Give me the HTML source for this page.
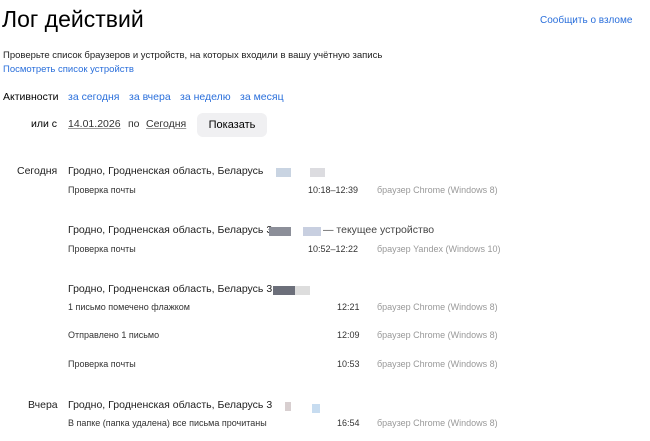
<!DOCTYPE html>
<html><head><meta charset="utf-8"><style>
body{margin:0;width:650px;height:441px;background:#fff;font-family:"Liberation Sans",Arial,sans-serif;position:relative;overflow:hidden;color:#000}
.a{position:absolute;white-space:nowrap;line-height:14px}
.l{color:#2a6fdb}
.s{font-size:9px;color:#333}
.g{font-size:9px;color:#999}
.m{font-size:10.5px;color:#222}
.u{text-decoration:underline;text-decoration-color:#999}
.px{position:absolute;height:9px}
</style></head><body>
<div class="a" style="left:2px;top:5px;font-size:23px;line-height:28px">Лог действий</div>
<div class="a l" style="left:540px;top:14px;font-size:10px">Сообщить о взломе</div>
<div class="a" style="left:3px;top:49px;font-size:9.5px;color:#222">Проверьте список браузеров и устройств, на которых входили в вашу учётную запись</div>
<div class="a l" style="left:3px;top:63px;font-size:9.5px">Посмотреть список устройств</div>
<div class="a" style="left:3px;top:90px;font-size:10.5px">Активности</div>
<div class="a l" style="left:68px;top:90px;font-size:10.5px">за сегодня</div>
<div class="a l" style="left:129px;top:90px;font-size:10.5px">за вчера</div>
<div class="a l" style="left:180px;top:90px;font-size:10.5px">за неделю</div>
<div class="a l" style="left:240px;top:90px;font-size:10.5px">за месяц</div>
<div class="a" style="left:31px;top:117px;font-size:10.5px">или с</div>
<div class="a u" style="left:68px;top:117px;font-size:10.5px;color:#333">14.01.2026</div>
<div class="a" style="left:128px;top:117px;font-size:10.5px;color:#333">по</div>
<div class="a u" style="left:146px;top:117px;font-size:10.5px;color:#333">Сегодня</div>
<div style="position:absolute;left:197px;top:113px;width:70px;height:24px;background:#f0f0f2;border-radius:6px;font-size:11px;line-height:24px;text-align:center">Показать</div>

<div class="a m" style="left:17px;top:164px">Сегодня</div>
<div class="a m" style="left:68px;top:164px">Гродно, Гродненская область, Беларусь</div>
<div class="px" style="left:276px;top:168px;width:15px;background:#c9d4e2"></div><div class="px" style="left:310px;top:168px;width:15px;background:#dcdce0"></div>
<div class="a s" style="left:68px;top:183px">Проверка почты</div>
<div class="a s" style="left:308px;top:183px">10:18–12:39</div>
<div class="a g" style="left:377px;top:183px">браузер Chrome (Windows 8)</div>

<div class="a m" style="left:68px;top:223px">Гродно, Гродненская область, Беларусь 3</div>
<div class="px" style="left:269px;top:227px;width:22px;background:#8c8f99"></div><div class="px" style="left:303px;top:227px;width:18px;background:#c8cfe0"></div>
<div class="a m" style="left:323px;top:223px;color:#444">— текущее устройство</div>
<div class="a s" style="left:68px;top:242px">Проверка почты</div>
<div class="a s" style="left:308px;top:242px">10:52–12:22</div>
<div class="a g" style="left:377px;top:242px">браузер Yandex (Windows 10)</div>

<div class="a m" style="left:68px;top:282px">Гродно, Гродненская область, Беларусь 3</div>
<div class="px" style="left:273px;top:286px;width:22px;background:#6c6f7a"></div><div class="px" style="left:295px;top:286px;width:15px;background:#ddd"></div>
<div class="a s" style="left:68px;top:300px">1 письмо помечено флажком</div>
<div class="a s" style="left:337px;top:300px">12:21</div>
<div class="a g" style="left:377px;top:300px">браузер Chrome (Windows 8)</div>
<div class="a s" style="left:68px;top:328px">Отправлено 1 письмо</div>
<div class="a s" style="left:337px;top:328px">12:09</div>
<div class="a g" style="left:377px;top:328px">браузер Chrome (Windows 8)</div>
<div class="a s" style="left:68px;top:357px">Проверка почты</div>
<div class="a s" style="left:337px;top:357px">10:53</div>
<div class="a g" style="left:377px;top:357px">браузер Chrome (Windows 8)</div>

<div class="a m" style="left:28px;top:398px">Вчера</div>
<div class="a m" style="left:68px;top:398px">Гродно, Гродненская область, Беларусь 3</div>
<div class="px" style="left:285px;top:402px;width:6px;background:#d8cfd0"></div><div class="px" style="left:312px;top:404px;width:8px;background:#c7dcf0"></div>
<div class="a s" style="left:68px;top:416px">В папке (папка удалена) все письма прочитаны</div>
<div class="a s" style="left:337px;top:416px">16:54</div>
<div class="a g" style="left:377px;top:416px">браузер Chrome (Windows 8)</div>
</body></html>
